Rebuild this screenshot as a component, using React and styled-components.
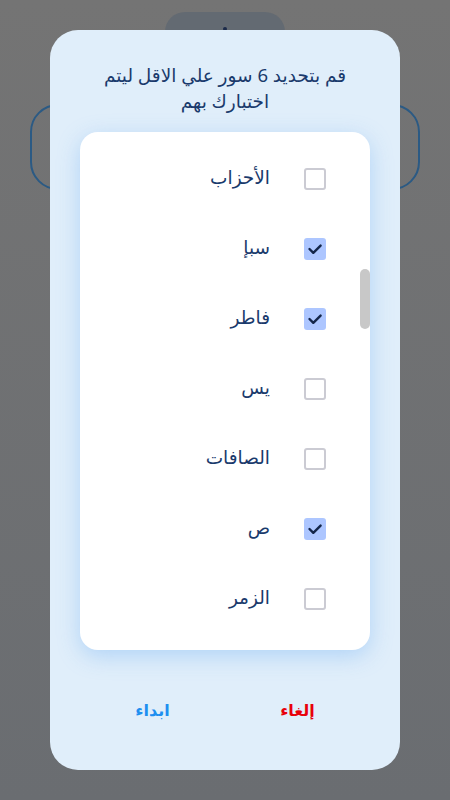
import React from "react";
import styled, { createGlobalStyle } from "styled-components";

const Global = createGlobalStyle`
  html, body { margin: 0; padding: 0; }
  body { font-family: "Noto Sans", "DejaVu Sans", sans-serif; }
`;

const Page = styled.div`
  position: relative;
  width: 450px;
  height: 800px;
  overflow: hidden;
  background: linear-gradient(#747474, #6a6d71);
  display: flex;
  flex-direction: column;
  align-items: center;
`;

const Pill = styled.div`
  margin-top: 12px;
  width: 120px;
  height: 40px;
  border-radius: 20px;
  background: #636a72;
  display: flex;
  justify-content: center;
  padding-top: 15px;
  box-sizing: border-box;
`;

const Dot = styled.span`
  width: 4px;
  height: 4px;
  border-radius: 50%;
  background: #1b2a4a;
`;

const OutlineBox = styled.div`
  margin-top: 52px;
  width: 390px;
  height: 86px;
  box-sizing: border-box;
  border: 2px solid #2b5a84;
  border-radius: 28px;
`;

const Modal = styled.div`
  position: absolute;
  left: 50px;
  top: 30px;
  width: 350px;
  height: 740px;
  border-radius: 28px;
  background: #e0eefa;
  display: flex;
  flex-direction: column;
  box-sizing: border-box;
  padding: 32px 30px 0;
`;

const Title = styled.h2`
  margin: 0;
  font-weight: 400;
  font-size: 18.5px;
  line-height: 26px;
  color: #1a3a6c;
  text-align: center;
`;

const Card = styled.div`
  position: relative;
  margin-top: 18px;
  height: 518px;
  background: #ffffff;
  border-radius: 18px;
  box-shadow: 0 6px 22px rgba(120, 180, 245, 0.45);
  overflow: hidden;
`;

const List = styled.div`
  padding-top: 12px;
  display: flex;
  flex-direction: column;
`;

const Row = styled.label`
  height: 70px;
  display: flex;
  align-items: center;
  gap: 34px;
  padding-right: 44px;
  direction: rtl;
`;

const Box = styled.span`
  width: 22px;
  height: 22px;
  box-sizing: border-box;
  border-radius: 3px;
  flex: none;
  display: flex;
  align-items: center;
  justify-content: center;
  border: ${(p) => (p.$checked ? "none" : "2px solid #cbcbd3")};
  background: ${(p) => (p.$checked ? "#adc6ff" : "#ffffff")};
`;

const Label = styled.span`
  font-size: 18.5px;
  color: #1a3a6c;
  line-height: 1;
  margin-top: -3px;
`;

const Thumb = styled.div`
  position: absolute;
  right: 0;
  top: 137px;
  width: 10px;
  height: 60px;
  border-radius: 5px;
  background: #c8c8c8;
`;

const Actions = styled.div`
  display: flex;
  direction: rtl;
  margin-top: 43px;
`;

const Action = styled.button`
  flex: 1;
  background: none;
  border: none;
  font-family: inherit;
  font-weight: 700;
  font-size: 16px;
  color: ${(p) => p.$color};
  padding: 6px 0;
  cursor: pointer;
`;

const Check = () => (
  <svg width="16" height="16" viewBox="0 0 16 16">
    <path d="M2.5 8 L6.3 11.8 L13.6 4.6" fill="none" stroke="#14264a" strokeWidth="2.4" strokeLinecap="round" strokeLinejoin="round" />
  </svg>
);

const items = [
  { name: "الأحزاب", checked: false },
  { name: "سبإ", checked: true },
  { name: "فاطر", checked: true },
  { name: "يس", checked: false },
  { name: "الصافات", checked: false },
  { name: "ص", checked: true },
  { name: "الزمر", checked: false },
];

export default function App() {
  return (
    <>
      <Global />
      <Page>
        <Pill>
          <Dot />
        </Pill>
        <OutlineBox />
        <Modal>
          <Title dir="rtl">قم بتحديد 6 سور علي الاقل ليتم اختبارك بهم</Title>
          <Card>
            <List>
              {items.map((it) => (
                <Row key={it.name}>
                  <Box $checked={it.checked}>{it.checked && <Check />}</Box>
                  <Label>{it.name}</Label>
                </Row>
              ))}
            </List>
            <Thumb />
          </Card>
          <Actions>
            <Action $color="#e8000b">إلغاء</Action>
            <Action $color="#1e8ff0">ابداء</Action>
          </Actions>
        </Modal>
      </Page>
    </>
  );
}
